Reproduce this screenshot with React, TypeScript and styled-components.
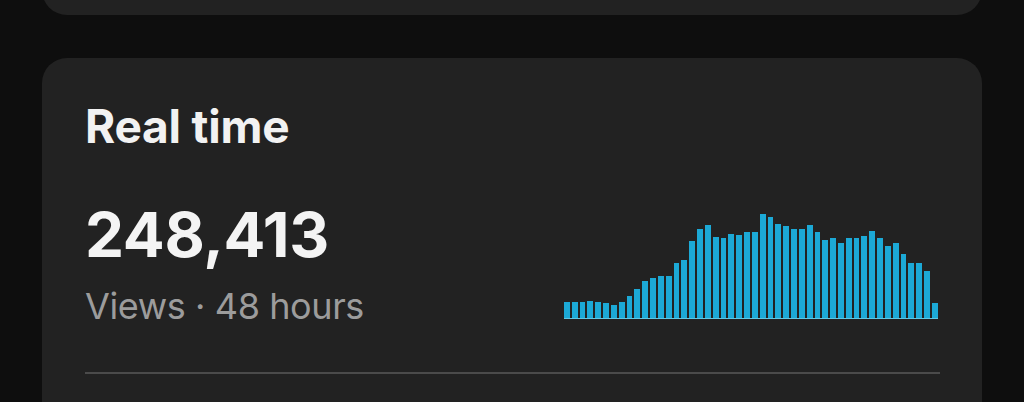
import React from "react";
import styled, { createGlobalStyle } from "styled-components";

const Global = createGlobalStyle`
  html, body {
    margin: 0;
    padding: 0;
    background: #0e0e0e;
    overflow: hidden;
  }
  body {
    font-family: Inter, "Noto Sans", "Liberation Sans", sans-serif;
    -webkit-font-smoothing: antialiased;
  }
`;

const Page = styled.div`
  width: 1024px;
  height: 402px;
  box-sizing: border-box;
  padding: 0 42px;
  display: flex;
  flex-direction: column;
  gap: 43px;
  overflow: hidden;
`;

const PrevCard = styled.div`
  height: 120px;
  margin-top: -105px;
  background: #222222;
  border-radius: 25px;
`;

const Card = styled.section`
  background: #222222;
  border-radius: 25px 25px 0 0;
  padding: 41px 42px 0 43px;
  display: flex;
  flex-direction: column;
  flex: 1;
`;

const Title = styled.h2`
  margin: 0;
  font-size: 46px;
  line-height: 54px;
  font-weight: 700;
  color: #f2f2f2;
  letter-spacing: -0.2px;
`;

const StatRow = styled.div`
  display: flex;
  justify-content: space-between;
  align-items: flex-end;
  margin-top: 45px;
`;

const StatText = styled.div`
  display: flex;
  flex-direction: column;
  gap: 12px;
`;

const Value = styled.div`
  font-size: 62px;
  line-height: 74px;
  font-weight: 700;
  color: #f4f4f4;
  letter-spacing: -0.3px;
`;

const Caption = styled.div`
  font-size: 36px;
  line-height: 44px;
  font-weight: 400;
  color: #9c9c9c;
  letter-spacing: -0.4px;
`;

const Chart = styled.div`
  width: 374px;
  height: 106px;
  margin-bottom: 9px;
  margin-right: 2px;
  display: flex;
  align-items: flex-end;
  gap: 2px;
  border-bottom: 1px solid #5ec6e4;
`;

const Bar = styled.div`
  flex: 1;
  background: #1ca9d6;
`;

const Divider = styled.div`
  height: 2px;
  background: #4b4b4b;
  margin-top: 44px;
`;

const heights = [
  16, 16, 16, 17, 16, 15, 13, 16, 22, 29, 37, 40, 42, 42, 55, 58,
  77, 89, 93, 81, 80, 84, 83, 86, 86, 104, 101, 94, 92, 89, 89, 93,
  86, 78, 80, 75, 80, 80, 82, 87, 80, 72, 75, 64, 55, 55, 47, 15,
];

export default function App() {
  return (
    <>
      <Global />
      <Page>
        <PrevCard />
        <Card>
          <Title>Real time</Title>
          <StatRow>
            <StatText>
              <Value>248,413</Value>
              <Caption>Views · 48 hours</Caption>
            </StatText>
            <Chart>
              {heights.map((h, i) => (
                <Bar key={i} style={{ height: `${h}px` }} />
              ))}
            </Chart>
          </StatRow>
          <Divider />
        </Card>
      </Page>
    </>
  );
}
